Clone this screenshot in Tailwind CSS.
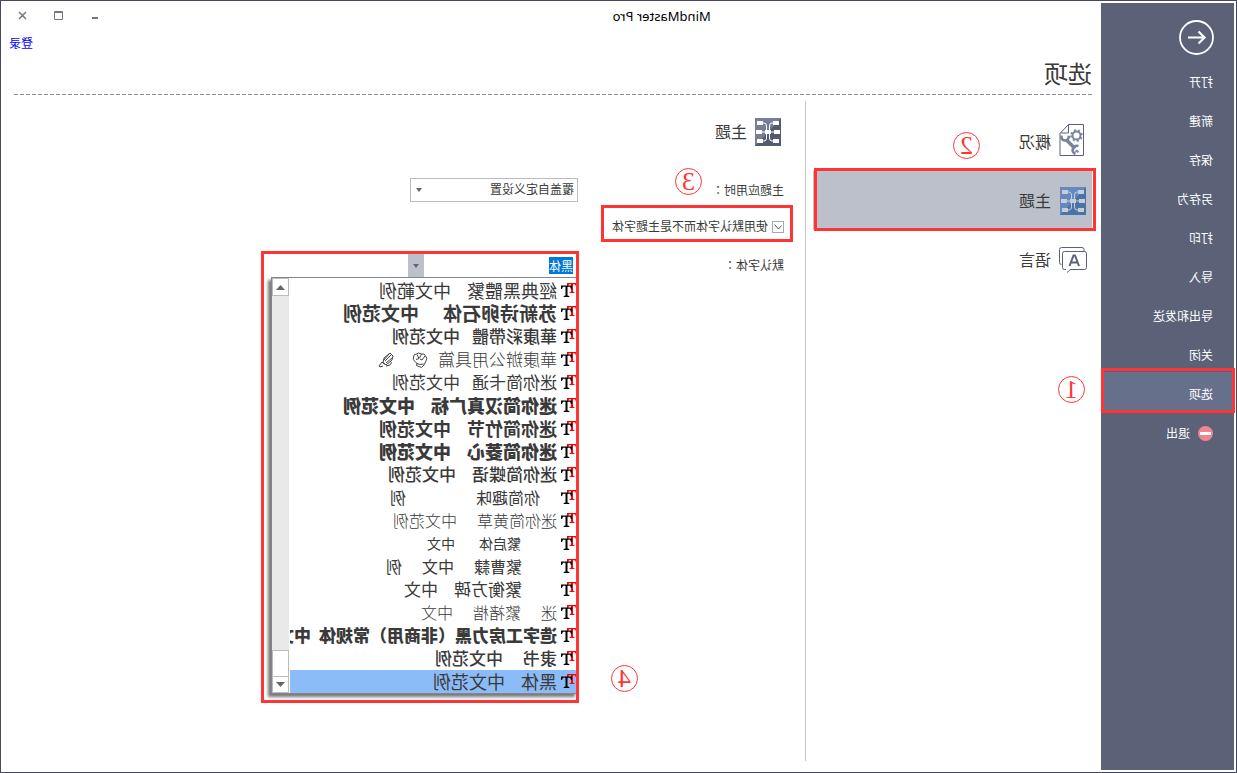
<!DOCTYPE html>
<html lang="zh-CN">
<head>
<meta charset="utf-8">
<title>MindMaster Pro</title>
<script src="https://cdn.jsdelivr.net/npm/@tailwindcss/browser@4"></script>
</head>
<body class="bg-white font-['Open_Sans','Noto_Sans_CJK_SC',sans-serif] text-xs text-[#3a3a3a]">
<svg class="hidden" aria-hidden="true">
  <symbol id="map" viewBox="0 0 26 28">
    <g fill="currentColor"><path d="M2 3h6v4H2zM18 3h6v4h-6zM1 12h6v4H1zM10 12h6v4h-6zM19 12h6v4h-6zM2 21h6v4H2zM18 21h6v4h-6z"/></g>
    <path d="M8 5h1Q11.500 5 11.500 8v12Q11.500 23 9 23H8M18 5h-1q-2.500 0-2.500 3v12q0 3 2.500 3h1M7 14h12" fill="none" stroke="currentColor"/>
  </symbol>
  <symbol id="tt" viewBox="0 0 16 15">
    <path d="M0 0h10v3.500H9L8 1.200H6v7.600l1.500.4v.8h-5v-.8L4 8.800V1.200H2L1 3.500H0z" fill="#f00"/>
    <path d="M5 2.500h11v3.500h-1l-1-2.300h-2.500v8.800l1.800.5v1H7.700v-1l1.800-.5V3.700H7L6 6H5z" fill="#000"/>
  </symbol>
</svg>
<!-- The whole window is flipped left to right -->
<div class="flex min-h-screen -scale-x-100 border border-[#454860] bg-white p-0.5">
  <aside class="w-[133px] shrink-0 bg-[#5b6278] pt-[17px] text-white">
    <button class="ml-5 block size-[35px]" aria-label="返回">
      <svg viewBox="0 0 35 35" class="size-[35px]" fill="none" stroke="#fff"><circle cx="17.500" cy="17.500" r="16.500" stroke-width="1.800"/><path d="M26 17.500H10M15.500 11.500l-6 6 6 6" stroke-width="2.200"/></svg>
    </button>
    <nav class="mt-2 flex flex-col">
      <button class="h-[39px] pl-[21px] text-left">打开</button>
      <button class="h-[39px] pl-[21px] text-left">新建</button>
      <button class="h-[39px] pl-[21px] text-left">保存</button>
      <button class="h-[39px] pl-[21px] text-left">另存为</button>
      <button class="h-[39px] pl-[21px] text-left">打印</button>
      <button class="h-[39px] pl-[21px] text-left">导入</button>
      <button class="h-[39px] pl-[21px] text-left">导出和发送</button>
      <button class="h-[39px] pl-[21px] text-left">关闭</button>
      <button class="relative h-[39px] pl-[21px] text-left">
        <span class="absolute -top-[3px] left-0 h-[39px] w-full bg-[#67708b]"></span>
        <span class="absolute -top-[7px] -left-px h-[45px] w-[134px] border-3 border-[#ff3535]"></span>
        <span class="relative">选项</span>
      </button>
      <button class="flex h-[39px] items-center gap-2 pl-[21px] text-left">
        <svg viewBox="0 0 15 15" class="size-[15px]"><circle cx="7.500" cy="7.500" r="7.500" fill="#f0848f"/><path d="M2 6h11v3H2z" fill="#fff"/></svg>退出
      </button>
    </nav>
  </aside>

  <main class="flex min-w-0 grow flex-col pr-[11px] pl-[9px]">
    <header class="flex h-7 items-center">
      <div class="ml-[35%] pl-1 font-['Noto_Sans'] text-[13px] text-black">MindMaster Pro</div>
      <div class="mb-1 ml-auto flex items-center gap-[27px]">
        <button aria-label="最小化"><svg viewBox="0 0 9 9" class="size-[9px]"><path d="M1 6h6v2H1z" fill="#777"/></svg></button>
        <button aria-label="最大化"><svg viewBox="0 0 9 9" class="size-[9px]" fill="none" stroke="#777"><path d="M.5.5h8v8h-8zM0 1.500h9"/></svg></button>
        <button aria-label="关闭窗口"><svg viewBox="0 0 9 9" class="mr-1 size-[9px]" fill="none" stroke="#777" stroke-width="1.500"><path d="M1 1l7 7M8 1L1 8"/></svg></button>
      </div>
    </header>
    <div class="flex h-[26px] items-center justify-end"><a href="#" class="-mr-[5px] text-[#0000ff]">登录</a></div>
    <h1 class="h-[37px] text-2xl leading-[34px]">选项</h1>
    <div class="h-px bg-[repeating-linear-gradient(90deg,#8f8f8f_0_4px,transparent_4px_6px)]"></div>

    <div class="flex grow pt-1.5 pb-[9px]">
      <nav class="relative flex w-[287px] shrink-0 flex-col border-r border-[#c6c6c6] pt-[11px] pr-[7px] text-base">
        <button class="flex h-[59px] items-center gap-2 pl-[5px]">
          <svg viewBox="0 0 28 32" class="h-8 w-7 -translate-y-0.5" fill="none">
            <path d="M3.500 .5h15l8.500 9v22H3.500z" stroke="#5b6278"/>
            <path d="M18.500 .5v8.500h8" stroke="#5b6278"/>
            <circle cx="10.500" cy="11.500" r="4" stroke="#7b839c" stroke-width="2"/>
            <circle cx="10.500" cy="11.500" r="5.500" stroke="#7b839c" stroke-width="1.500" stroke-dasharray="2.200 2.100"/>
            <path d="M21 15.500L12 24.500" stroke="#7b839c" stroke-width="3.500"/>
            <path d="M25.500 11.500q.8 4.500-3.500 5-4 0-3.800-4.800M11.500 30q4-2 2.500-5.500-2-3.500-5.500-2.500" stroke="#7b839c" stroke-width="2.600"/>
            <path d="M8.500 28l3-1.500" stroke="#7b839c" stroke-width="2"/>
          </svg>
          概况
        </button>
        <button class="relative flex h-[59px] items-center gap-2 bg-[#bcc0cb] pl-[5px]">
          <svg viewBox="0 0 28 28" class="size-7 text-[#c8ccd8]"><path d="M1 0h26v28H1z" fill="#4b73a4"/><path d="M1 0h26v28z" fill="#6489bd"/><use href="#map" x="1" width="26" height="28"/></svg>
          主题
          <span class="absolute -top-[3px] -left-1 h-[63px] w-[282px] border-3 border-[#ff3535]"></span>
        </button>
        <button class="flex h-[59px] items-center gap-2 pl-[5px]">
          <svg viewBox="0 0 28 26" class="h-[26px] w-7" fill="none" stroke="#5b6278">
            <path d="M3 4.500V2.500q0-2 2-2h20.500q2 0 2 2v13q0 2-2 2"/>
            <path d="M17 22.500H2.500q-2 0-2-2v-14q0-2 2-2H22.500q2 0 2 2v14q0 2-2 2H21M16.500 22.500l3.500 3"/>
            <path d="M8 19l4-10.500h1.500l4 10.500M9.300 15.500h7" stroke-width="2"/>
          </svg>
          语言
        </button>
      </nav>

      <section class="min-w-0 grow pl-[21px]">
        <h2 class="flex h-[62px] items-center gap-2 pl-[3px] text-base">
          <svg viewBox="0 0 26 28" class="h-7 w-[26px] text-white"><path d="M0 0h26v28H0z" fill="#535b74"/><path d="M0 0h26v28z" fill="#767e98"/><use href="#map" width="26" height="28"/></svg>
          主题
        </h2>
        <div class="mt-[9px] flex h-9 items-center">
          <label for="apply" class="w-[206px] shrink-0">主题应用时<span class="font-['Noto_Sans_CJK_TC']" lang="zh-TW">：</span></label>
          <div class="relative">
            <select id="apply" class="h-6 w-[168px] appearance-none border border-[#bcbcbc] bg-white pl-[3px]"><option>覆盖自定义设置</option></select>
            <svg viewBox="0 0 6 4" class="pointer-events-none absolute top-2.5 right-1.5 h-1 w-1.5"><path d="M0 0h6L3 4z" fill="#666"/></svg>
          </div>
        </div>
        <div class="relative flex h-[37px] items-center gap-1">
          <input id="usefont" type="checkbox" checked class="peer size-3 appearance-none border border-[#a9a9a9] bg-white">
          <svg viewBox="0 0 12 12" class="pointer-events-none absolute left-0 hidden size-3 peer-checked:block" fill="none" stroke="#555"><path d="M2.500 4.500l3 3.500 4-4.500"/></svg>
          <label for="usefont">使用默认字体而不是主题字体</label>
          <span class="pointer-events-none absolute -top-[3px] -left-[9px] h-[37px] w-[192px] border-3 border-[#ff3535]"></span>
        </div>
        <div class="flex items-start">
          <label for="font" class="w-[206px] shrink-0 leading-10">默认字体<span class="font-['Noto_Sans_CJK_TC']" lang="zh-TW">：</span></label>
          <div class="relative mt-[9px] flex h-[23px] w-[170px] items-center">
            <input id="font" type="text" value="黑体" class="ml-[5px] h-[17px] w-6 bg-[#0078d7] text-white">
            <button class="ml-auto flex h-full w-4 items-center justify-center bg-[#bcc0cb]" aria-label="展开"><svg viewBox="0 0 6 4" class="h-1 w-1.5"><path d="M0 0h6L3 4z" fill="#666"/></svg></button>

            <div class="absolute top-full left-0 flex w-[307px] border border-[#83868f] bg-white shadow-[3px_3px_3px_#777]">
              <ul role="listbox" class="w-[287px] overflow-hidden pt-px text-[17px] whitespace-nowrap *:flex *:h-[23px] *:items-center *:leading-[20px]">
                <li role="option" class="gap-4 text-lg"><svg class="-mr-3 h-[15px] w-4 shrink-0"><use href="#tt"/></svg><span>經典黑體繁</span><span>中文範例</span></li>
                <li role="option" class="gap-6 text-[19px] font-bold"><svg class="-mr-5 h-[15px] w-4 shrink-0"><use href="#tt"/></svg><span>苏新诗卵石体</span><span>中文范例</span></li>
                <li role="option" class="gap-3 font-medium"><svg class="-mr-2 h-[15px] w-4 shrink-0"><use href="#tt"/></svg><span>華康彩帶體</span><span>中文范例</span></li>
                <li role="option" class="gap-2.5 font-light"><svg class="-mr-1.5 h-[15px] w-4 shrink-0"><use href="#tt"/></svg><span>華康辦公用具篇</span>
                  <svg viewBox="0 0 16 16" class="size-4 shrink-0" fill="none" stroke="#444"><path d="M4 13L2 9q-2-3 .5-5 1-3 4-2 3-2 5 0 3 0 3 3 1 3-1.500 4.500l-2 2 .5 2-5 2-2.500-2.500M3 4l3 4 2-1M6.500 2l2 4M11 2.500l-2 4 3 1M4.500 12q4 1 7-.5"/></svg>
                  <svg viewBox="0 0 16 16" class="ml-2 size-4 shrink-0" fill="none" stroke="#444"><path d="M1 4l3-3 6 5 1 5-3 2-6-5zM3 3l6 6M2 6l6 5M5 2l5 6M9 12l3-2 3 4-1 1-3-1M4 9q-3 1 0 4l4 1"/></svg>
                </li>
                <li role="option" class="gap-3"><svg class="-mr-2 h-[15px] w-4 shrink-0"><use href="#tt"/></svg><span>迷你简卡通</span><span>中文范例</span></li>
                <li role="option" class="gap-4 text-lg font-black"><svg class="-mr-3 h-[15px] w-4 shrink-0"><use href="#tt"/></svg><span>迷你简汉真广标</span><span>中文范例</span></li>
                <li role="option" class="gap-4 text-lg font-bold"><svg class="-mr-3 h-[15px] w-4 shrink-0"><use href="#tt"/></svg><span>迷你简竹节</span><span>中文范例</span></li>
                <li role="option" class="gap-4 text-lg font-black"><svg class="-mr-3 h-[15px] w-4 shrink-0"><use href="#tt"/></svg><span>迷你简菱心</span><span>中文范例</span></li>
                <li role="option" class="gap-4 font-medium"><svg class="-mr-3 h-[15px] w-4 shrink-0"><use href="#tt"/></svg><span>迷你简蝶语</span><span>中文范例</span></li>
                <li role="option" class="gap-5 text-base"><svg class="-mr-4 h-[15px] w-4 shrink-0"><use href="#tt"/></svg><span class="ml-[17px]">你简趣味</span><span class="ml-[50px]">例</span></li>
                <li role="option" class="gap-5 text-base font-light"><svg class="-mr-4 h-[15px] w-4 shrink-0"><use href="#tt"/></svg><span>迷你简黄草</span><span>中文范例</span></li>
                <li role="option" class="gap-6 text-sm"><svg class="-mr-5 h-[15px] w-4 shrink-0"><use href="#tt"/></svg><span class="ml-9">繁启体</span><span>中文</span></li>
                <li role="option" class="gap-5 text-base"><svg class="-mr-4 h-[15px] w-4 shrink-0"><use href="#tt"/></svg><span class="ml-[35px]">繁曹隸</span><span>中文</span><span>例</span></li>
                <li role="option" class="gap-4"><svg class="-mr-3 h-[15px] w-4 shrink-0"><use href="#tt"/></svg><span class="ml-[35px]">繁衡方碑</span><span>中文</span></li>
                <li role="option" class="gap-5 text-base font-light"><svg class="-mr-4 h-[15px] w-4 shrink-0"><use href="#tt"/></svg><span>迷</span><span>繁褚楷</span><span>中文</span></li>
                <li role="option" class="gap-2 font-black"><svg class="-mr-1 h-[15px] w-4 shrink-0"><use href="#tt"/></svg><span>造字工房力黑（非商用）常规体</span><span>中文范例</span></li>
                <li role="option" class="gap-5 font-medium"><svg class="-mr-4 h-[15px] w-4 shrink-0"><use href="#tt"/></svg><span>隶书</span><span>中文范例</span></li>
                <li role="option" aria-selected="true" class="gap-4 bg-[#8bbcf7] text-lg"><svg class="-mr-3 h-[15px] w-4 shrink-0"><use href="#tt"/></svg><span>黑体</span><span>中文范例</span></li>
              </ul>
              <div class="ml-auto flex w-[17px] flex-col bg-[#e9e9e9]">
                <button class="flex h-[18px] items-center justify-center border border-[#bbb] bg-white" aria-label="向上滚动"><svg viewBox="0 0 9 5" class="h-[5px] w-[9px]"><path d="M0 5h9L4.500 0z" fill="#666"/></svg></button>
                <div class="mt-auto h-[26px] border border-b-0 border-[#bbb] bg-white"></div>
                <button class="flex h-[17px] items-center justify-center border border-[#bbb] bg-white" aria-label="向下滚动"><svg viewBox="0 0 9 5" class="h-[5px] w-[9px]"><path d="M0 0h9L4.500 5z" fill="#666"/></svg></button>
              </div>
            </div>
            <span class="pointer-events-none absolute -top-[3px] -left-px h-[452px] w-[318px] border-3 border-[#ff3535]"></span>
          </div>
        </div>
      </section>
    </div>
  </main>

  <!-- Step markers floating over the window -->
  <div class="pointer-events-none absolute inset-0 font-['Liberation_Serif',serif] text-[26px] leading-7 text-[#ff3535]">
    <span class="absolute top-[375px] left-[151px] flex size-[27px] items-center justify-center rounded-full border border-current">1</span>
    <span class="absolute top-[131px] left-[256px] flex size-[27px] items-center justify-center rounded-full border border-current">2</span>
    <span class="absolute top-[167px] left-[534px] flex size-[27px] items-center justify-center rounded-full border border-current">3</span>
    <span class="absolute top-[664px] left-[598px] flex size-[27px] items-center justify-center rounded-full border border-current">4</span>
  </div>
</div>
</body>
</html>
